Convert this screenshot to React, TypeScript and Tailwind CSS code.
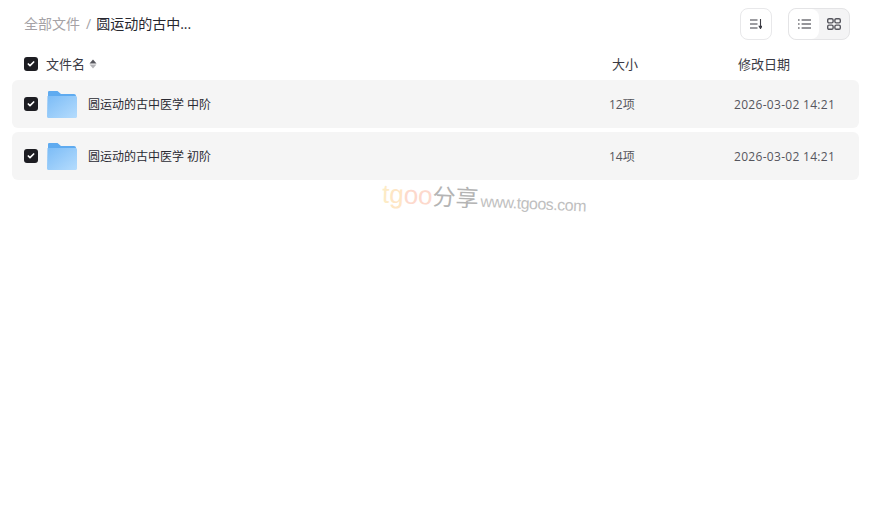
import { Check } from "lucide-react";

const FONT = "font-['Open_Sans','Noto_Sans_CJK_SC',sans-serif]";

const files = [
  { name: "圆运动的古中医学 中阶", size: "12项", date: "2026-03-02 14:21" },
  { name: "圆运动的古中医学 初阶", size: "14项", date: "2026-03-02 14:21" },
];

const CheckBox = () => (
  <span className="flex h-[14px] w-[14px] shrink-0 items-center justify-center rounded-[3px] bg-[#1d1d22]">
    <Check size={8} strokeWidth={5} className="text-white" />
  </span>
);

const FolderIcon = () => (
  <svg width="30" height="28" viewBox="0 0 30 28" className="block shrink-0">
    <defs>
      <linearGradient id="folderFront" x1="0" y1="0" x2="1" y2="1">
        <stop offset="0" stopColor="#7cbcf6" />
        <stop offset="1" stopColor="#b5dcfd" />
      </linearGradient>
    </defs>
    <path d="M1 2.5C1 1.4 1.6 1 2.5 1H10.5L14 4H27C28.2 4 29 4.8 29 6V10H1Z" fill="#5fabf0" />
    <path d="M0.5 6H28.5C29.4 6 30 6.6 30 7.5V26.5C30 27.4 29.4 28 28.5 28H1.5C0.6 28 0 27.4 0 26.5Z" fill="url(#folderFront)" />
    <rect x="23" y="9" width="3" height="1.5" fill="#9accf6" />
  </svg>
);

const SortMark = () => (
  <svg width="8" height="12" viewBox="0 0 8 12" className="ml-1">
    <path d="M4 1.5L7.5 5.5H0.5Z" fill="#55555c" />
    <path d="M4 10.5L0.5 6.5H7.5Z" fill="#b4b4b8" />
  </svg>
);

const SortButtonIcon = () => (
  <svg width="12" height="10" viewBox="0 0 12 10" fill="none" stroke="#3c3c44" strokeWidth="1.1">
    <path d="M0 1H7.5M0 5H7.5M0 9H7.5" />
    <path d="M10.5 0V8" />
    <path d="M9.2 7.2L10.5 9.5L11.8 7.2Z" fill="#3c3c44" />
  </svg>
);

const ListIcon = () => (
  <svg width="13" height="10" viewBox="0 0 13 10" fill="none" stroke="#2f2f37" strokeWidth="1.2">
    <path d="M0 1H1.6M0 5H1.6M0 9H1.6M3.6 1H13M3.6 5H13M3.6 9H13" />
  </svg>
);

const GridIcon = () => (
  <svg width="14" height="12" viewBox="0 0 14 12" fill="none" stroke="#55555d" strokeWidth="1.4">
    <rect x="0.7" y="0.7" width="5.4" height="4.2" rx="1.3" />
    <rect x="7.9" y="0.7" width="5.4" height="4.2" rx="1.3" />
    <rect x="0.7" y="7.1" width="5.4" height="4.2" rx="1.3" />
    <rect x="7.9" y="7.1" width="5.4" height="4.2" rx="1.3" />
  </svg>
);

export default function App() {
  return (
    <div className={`relative h-[514px] w-[874px] overflow-hidden bg-white ${FONT}`}>
      <div className="flex h-[48px] items-center justify-between pl-6 pr-6">
        <div className="flex items-center text-sm">
          <span className="text-[#a5a2a6]">全部文件</span>
          <span className="ml-[6px] mr-[5px] text-[#a5a2a6]">/</span>
          <span className="text-[#27272f]">圆运动的古中...</span>
        </div>
        <div className="flex items-center gap-4">
          <button className="flex h-8 w-8 items-center justify-center rounded-lg border border-[#e8e8ea] bg-white">
            <SortButtonIcon />
          </button>
          <div className="flex h-8 w-[62px] rounded-lg border border-[#e4e4e6] bg-[#f4f4f5]">
            <button className="flex w-[30px] items-center justify-center rounded-lg bg-white">
              <ListIcon />
            </button>
            <button className="flex flex-1 items-center justify-center">
              <GridIcon />
            </button>
          </div>
        </div>
      </div>

      <div className="flex h-[32px] items-center pl-6 text-[13px] text-[#3a3a44]">
        <CheckBox />
        <span className="ml-2 pt-px">文件名</span>
        <SortMark />
        <span className="ml-[515px] pt-px">大小</span>
        <span className="ml-[100px] pt-px">修改日期</span>
      </div>

      <div className="ml-3 mr-[15px] flex flex-col gap-1">
        {files.map((f) => (
          <div key={f.name} className="flex h-12 items-center rounded-md bg-[#f5f5f5] pl-3">
            <CheckBox />
            <span className="ml-[9px]">
              <FolderIcon />
            </span>
            <span className="ml-[11px] w-[521px] pt-px text-xs text-[#2b2b33]">{f.name}</span>
            <span className="w-[125px] pt-px text-xs text-[#55555d]">{f.size}</span>
            <span className="pt-px text-xs tracking-[0.3px] text-[#55555d]">{f.date}</span>
          </div>
        ))}
      </div>

      {/* watermark sits over the page */}
      <div className="absolute left-[382px] top-[179px] flex rotate-[2.5deg] items-baseline whitespace-nowrap font-['Liberation_Sans','Noto_Sans_CJK_SC',sans-serif]">
        <span className="text-[26px] text-[#fdebc6]">t</span>
        <span className="text-[26px] text-[#fee6c4]">g</span>
        <span className="text-[26px] text-[#fdd9cc]">oo</span>
        <span className="text-[23px] text-[#b4b4b4]">分享</span>
        <span className="ml-[2px] text-[16px] tracking-[-0.5px] text-[#c0c0c0]">www.tgoos.com</span>
      </div>
    </div>
  );
}
